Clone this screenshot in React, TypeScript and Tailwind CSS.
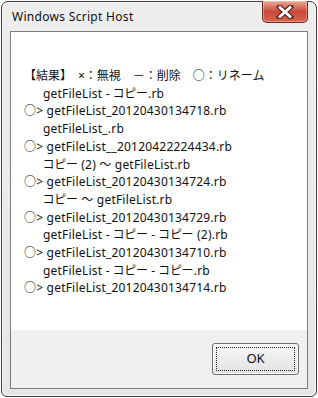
import React from "react";

const lines: { mark: boolean; text: string }[] = [
  { mark: false, text: "getFileList - コピー.rb" },
  { mark: true, text: "getFileList_20120430134718.rb" },
  { mark: false, text: "getFileList_.rb" },
  { mark: true, text: "getFileList__20120422224434.rb" },
  { mark: false, text: "コピー (2) ～ getFileList.rb" },
  { mark: true, text: "getFileList_20120430134724.rb" },
  { mark: false, text: "コピー ～ getFileList.rb" },
  { mark: true, text: "getFileList_20120430134729.rb" },
  { mark: false, text: "getFileList - コピー - コピー (2).rb" },
  { mark: true, text: "getFileList_20120430134710.rb" },
  { mark: false, text: "getFileList - コピー - コピー.rb" },
  { mark: true, text: "getFileList_20120430134714.rb" },
];

const CloseButton = () => (
  <div className="flex h-[22px] w-[46px] items-center justify-center rounded-b-[5px] border border-t-0 border-[#6b2a22] bg-gradient-to-b from-[#eaa898] via-[#c8483a] to-[#d8654f] shadow-[inset_0_0_0_1px_rgba(255,210,200,0.45)]">
    <svg width="18" height="14" viewBox="0 0 18 14">
      <path d="M3.5 2 L14.5 12 M14.5 2 L3.5 12" stroke="#4a1a14" strokeWidth="5" strokeLinecap="square" />
      <path d="M4 2.5 L14 11.5 M14 2.5 L4 11.5" stroke="#ffffff" strokeWidth="3" strokeLinecap="square" />
    </svg>
  </div>
);

export default function App() {
  return (
    <div className="h-[398px] w-[318px] bg-white pl-px pt-px font-['Noto_Sans','Noto_Sans_CJK_JP',sans-serif]">
      <div className="flex h-[396px] w-[316px] flex-col rounded-t-[7px] rounded-b-[6px] border border-[#3e3e3e] bg-gradient-to-b from-[#eeeeee] to-[#e6e6e6] shadow-[inset_0_0_0_1px_#f7f7f7]">
        {/* title bar */}
        <div className="flex h-[29px] items-start">
          <div className="pl-[10px] pt-[6px] text-[12px] leading-[18px] tracking-[0.3px] text-[#111]">
            Windows Script Host
          </div>
          <div className="ml-auto mr-[8px] -mt-px">
            <CloseButton />
          </div>
        </div>

        {/* client area */}
        <div className="mx-[8px] mb-[7px] flex flex-1 flex-col border border-[#7d7d7d]">
          <div className="h-[298px] bg-white pl-[13px] pt-[35px] text-[12px] leading-[17.7px] text-[#111]">
            <div className="whitespace-pre">【結果】　×：無視　－：削除　○：リネーム</div>
            {lines.map((l, i) =>
              l.mark ? (
                <div key={i} className="whitespace-pre tracking-[0.2px] [font-feature-settings:'palt']">
                  ○&gt; {l.text}
                </div>
              ) : (
                <div key={i} className="whitespace-pre pl-[19px] tracking-[0.2px] [font-feature-settings:'palt']">
                  {l.text}
                </div>
              )
            )}
          </div>
          <div className="flex flex-1 items-start justify-end bg-[#f0f0f0] pr-[8px] pt-[13px]">
            <button className="flex h-[32px] w-[87px] rounded-[3px] border border-[#6e6e6e] bg-gradient-to-b from-[#f7f7f7] to-[#e2e2e2] p-[3px] shadow-[inset_0_0_0_1px_#fcfcfc]">
              <div className="flex flex-1 items-center justify-center border border-dotted border-[#222] text-[13px] text-[#111]">
                OK
              </div>
            </button>
          </div>
        </div>
      </div>
    </div>
  );
}
